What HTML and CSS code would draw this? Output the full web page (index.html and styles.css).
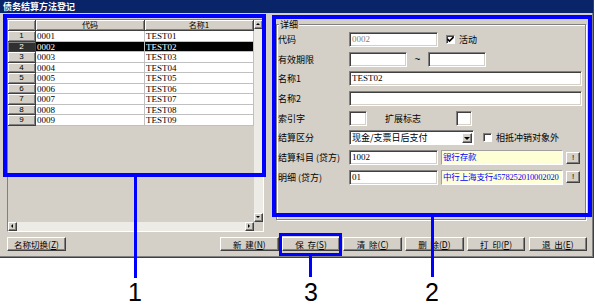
FILE: index.html
```html
<!DOCTYPE html>
<html lang="zh-CN">

<head>
    <meta charset="UTF-8">
    <title>债务结算方法登记</title>
    <link rel="stylesheet" href="styles.css">
</head>

<body>
    <div class="page">
        <div class="window">
            <div class="titlebar">债务结算方法登记</div>

            <div class="content">
                <div class="grid">
                    <div class="grid-main">
                        <div class="list">
                            <div class="hd"></div>
                            <div class="hd">代码</div>
                            <div class="hd">名称1</div>

                            <div class="num">1</div><div class="cell">0001</div><div class="cell">TEST01</div>
                            <div class="num sel">2</div><div class="cell sel">0002</div><div class="cell sel">TEST02</div>
                            <div class="num">3</div><div class="cell">0003</div><div class="cell">TEST03</div>
                            <div class="num">4</div><div class="cell">0004</div><div class="cell">TEST04</div>
                            <div class="num">5</div><div class="cell">0005</div><div class="cell">TEST05</div>
                            <div class="num">6</div><div class="cell">0006</div><div class="cell">TEST06</div>
                            <div class="num">7</div><div class="cell">0007</div><div class="cell">TEST07</div>
                            <div class="num">8</div><div class="cell">0008</div><div class="cell">TEST08</div>
                            <div class="num">9</div><div class="cell">0009</div><div class="cell">TEST09</div>
                        </div>
                        <div class="vscroll">
                            <span class="sbtn up"></span>
                            <span class="track"></span>
                            <span class="sbtn down"></span>
                        </div>
                    </div>
                    <div class="hscroll">
                        <span class="sbtn left"></span>
                        <span class="track"></span>
                        <span class="sbtn right"></span>
                        <span class="corner"></span>
                    </div>
                </div>

                <div class="group">
                    <span class="legend">详细</span>
                    <div class="rows">
                        <div class="row">
                            <span class="lbl">代码</span>
                            <span class="input w89 disabled">0002</span>
                            <span class="check on ml8">
                                <svg width="7" height="7" viewBox="0 0 7 7"><polyline points="0.5,3 2.5,5 6.5,1" fill="none" stroke="#000" stroke-width="1.6"/></svg>
                            </span>
                            <span class="chk-lbl">活动</span>
                        </div>
                        <div class="row">
                            <span class="lbl">有效期限</span>
                            <span class="input w58"></span>
                            <span class="tilde">~</span>
                            <span class="input w58"></span>
                        </div>
                        <div class="row">
                            <span class="lbl">名称1</span>
                            <span class="input w233">TEST02</span>
                        </div>
                        <div class="row">
                            <span class="lbl">名称2</span>
                            <span class="input w233"></span>
                        </div>
                        <div class="row">
                            <span class="lbl">索引字</span>
                            <span class="input w18"></span>
                            <span class="lbl2">扩展标志</span>
                            <span class="input w16"></span>
                        </div>
                        <div class="row">
                            <span class="lbl">结算区分</span>
                            <span class="select">
                                <span class="select-text">现金/支票日后支付</span>
                                <span class="drop"></span>
                            </span>
                            <span class="check ml9"></span>
                            <span class="chk-lbl">相抵冲销对象外</span>
                        </div>
                        <div class="row">
                            <span class="lbl">结算科目 (贷方)</span>
                            <span class="input w89">1002</span>
                            <span class="ref">银行存款</span>
                            <span class="mini">!</span>
                        </div>
                        <div class="row">
                            <span class="lbl">明细 (贷方)</span>
                            <span class="input w89">01</span>
                            <span class="ref">中行上海支行4578252010002020</span>
                            <span class="mini">!</span>
                        </div>
                    </div>
                </div>
            </div>

            <div class="buttons">
                <span class="btn wide">名称切换(<u>Z</u>)</span>
                <div class="btn-group">
                    <span class="btn">新&nbsp;&nbsp;建(<u>N</u>)</span>
                    <span class="btn">保&nbsp;&nbsp;存(<u>S</u>)</span>
                    <span class="btn">清&nbsp;&nbsp;除(<u>C</u>)</span>
                    <span class="btn">删&nbsp;&nbsp;除(<u>D</u>)</span>
                    <span class="btn">打&nbsp;&nbsp;印(<u>P</u>)</span>
                    <span class="btn">退&nbsp;&nbsp;出(<u>E</u>)</span>
                </div>
            </div>
        </div>

        <!-- annotation marks drawn over the screenshot -->
        <div class="mark frame1"></div>
        <div class="mark frame2"></div>
        <div class="mark frame3"></div>
        <div class="line line1"></div>
        <div class="line line2"></div>
        <div class="line line3"></div>
        <div class="callout n1">1</div>
        <div class="callout n2">2</div>
        <div class="callout n3">3</div>
    </div>
</body>

</html>
```

FILE: styles.css
```css
body {
    margin: 0;
    background-color: #fff;
    font-family: "Liberation Serif", "Noto Sans CJK SC", serif;
    font-size: 9px;
    color: #000;
}

.page {
    position: relative;
    width: 595px;
    height: 308px;
}

.window {
    width: 594px;
    height: 258px;
    box-sizing: border-box;
    background-color: #d4d0c8;
    border-right: 1px solid #404040;
    border-bottom: 1px solid #404040;
    box-shadow: inset -1px -1px #808080;
    display: flex;
    flex-direction: column;
}

.titlebar {
    height: 13px;
    line-height: 13px;
    padding-left: 3px;
    background-color: #0a246a;
    color: #fff;
    font-family: "Noto Sans CJK SC", sans-serif;
    font-weight: bold;
}

.content {
    display: flex;
    align-items: flex-start;
    gap: 12px;
    padding-left: 7px;
}

/* list grid */
.grid {
    margin-top: 6px;
    width: 257px;
    height: 213px;
    box-sizing: border-box;
    border: 1px solid;
    border-color: #808080 #fff #fff #808080;
    display: flex;
    flex-direction: column;
}

.grid-main {
    flex: 1;
    display: flex;
    min-height: 0;
}

.list {
    width: 246px;
    display: grid;
    grid-template-columns: 28px 109px 109px;
    grid-template-rows: 11px;
    grid-auto-rows: 10.5px;
    align-content: start;
}

.hd,
.num {
    box-sizing: border-box;
    background-color: #d4d0c8;
    box-shadow: inset 1px 1px #fff, inset -1px -1px #808080;
    border-right: 1px solid #404040;
    border-bottom: 1px solid #404040;
    text-align: center;
    font-family: "Noto Sans CJK SC", sans-serif;
    font-size: 8px;
    line-height: 9px;
}

.num {
    font-family: "Liberation Sans", sans-serif;
}

.num.sel {
    background-color: #303030;
    color: #fff;
    box-shadow: inset 1px 1px #808080;
}

.cell {
    box-sizing: border-box;
    background-color: #fff;
    border-right: 1px solid #c0c0c0;
    border-bottom: 1px solid #c0c0c0;
    padding-left: 1px;
    line-height: 10px;
    white-space: nowrap;
    overflow: hidden;
}

.cell.sel {
    background-color: #000;
    color: #fff;
}

.vscroll {
    width: 9px;
    display: flex;
    flex-direction: column;
}

.hscroll {
    height: 9px;
    display: flex;
}

.track {
    flex: 1;
    background-color: #ecebe6;
}

.sbtn {
    position: relative;
    width: 9px;
    height: 9px;
    flex: none;
    box-sizing: border-box;
    background-color: #d4d0c8;
    border: 1px solid;
    border-color: #fff #404040 #404040 #fff;
    box-shadow: inset -1px -1px #808080;
}

.sbtn::after {
    content: "";
    position: absolute;
    left: 1px;
    top: 1px;
    border: 2px solid transparent;
}

.sbtn.up::after {
    border-top: 0;
    border-bottom-color: #000;
    top: 2px;
}

.sbtn.down::after {
    border-bottom: 0;
    border-top-color: #000;
    top: 2px;
}

.sbtn.left::after {
    border-left: 0;
    border-right-color: #000;
    left: 2px;
}

.sbtn.right::after {
    border-right: 0;
    border-left-color: #000;
    left: 2px;
}

.hscroll .track {
    flex: none;
    width: 228px;
}

.corner {
    flex: 1;
    background-color: #d4d0c8;
}

/* detail group */
.group {
    margin-top: 11px;
    width: 310px;
    height: 196px;
    box-sizing: border-box;
    border: 1px solid #808080;
    box-shadow: inset 1px 1px #fff, 1px 1px #fff;
    padding: 0 1px;
}

.legend {
    display: block;
    width: fit-content;
    margin: -5px 0 0 1px;
    padding: 0 1px;
    height: 10px;
    line-height: 10px;
    background-color: #d4d0c8;
    font-family: "Noto Sans CJK SC", sans-serif;
}

.rows {
    margin-top: 2px;
    display: flex;
    flex-direction: column;
    gap: 4.7px;
}

.row {
    display: flex;
    align-items: center;
    height: 15px;
}

.lbl {
    width: 71px;
    flex: none;
    font-family: "Noto Sans CJK SC", sans-serif;
    white-space: nowrap;
}

.lbl2 {
    margin: 0 35px 0 18px;
    font-family: "Noto Sans CJK SC", sans-serif;
}

.input {
    height: 15px;
    box-sizing: border-box;
    background-color: #fff;
    border: 1px solid;
    border-color: #808080 #fff #fff #808080;
    box-shadow: inset 1px 1px #404040, inset -1px -1px #d4d0c8;
    padding-left: 2px;
    line-height: 13px;
    white-space: nowrap;
}

.input.disabled {
    color: #808080;
}

.w89 { width: 89px; }
.w58 { width: 58px; }
.w233 { width: 233px; }
.w18 { width: 18px; }
.w16 { width: 16px; }

.tilde {
    width: 21px;
    text-align: center;
    font-family: "Liberation Sans", sans-serif;
    font-size: 10px;
}

.check {
    width: 9px;
    height: 9px;
    box-sizing: border-box;
    background-color: #fff;
    border: 1px solid;
    border-color: #808080 #fff #fff #808080;
    box-shadow: inset 1px 1px #404040;
    display: flex;
    align-items: center;
    justify-content: center;
}

.ml8 { margin-left: 8px; }
.ml9 { margin-left: 9px; }

.chk-lbl {
    margin-left: 4px;
    font-family: "Noto Sans CJK SC", sans-serif;
}

.select {
    width: 125px;
    height: 15px;
    box-sizing: border-box;
    display: flex;
    background-color: #fff;
    border: 1px solid;
    border-color: #808080 #fff #fff #808080;
    box-shadow: inset 1px 1px #404040;
    padding: 2px 1px 1px 2px;
}

.select-text {
    flex: 1;
    line-height: 10px;
    font-family: "Noto Sans CJK SC", sans-serif;
}

.drop {
    position: relative;
    width: 10px;
    box-sizing: border-box;
    background-color: #d4d0c8;
    border: 1px solid;
    border-color: #fff #404040 #404040 #fff;
    box-shadow: inset -1px -1px #808080;
}

.drop::after {
    content: "";
    position: absolute;
    left: 1px;
    top: 3px;
    border: 3px solid transparent;
    border-bottom: 0;
    border-top-color: #000;
}

.ref {
    margin-left: 3px;
    width: 122px;
    height: 15px;
    box-sizing: border-box;
    background-color: #ffffd6;
    border: 1px solid;
    border-color: #a0a0a0 #fff #fff #a0a0a0;
    padding-left: 1px;
    line-height: 12px;
    font-size: 8.5px;
    letter-spacing: -0.15px;
    color: #0000ff;
    white-space: nowrap;
    overflow: hidden;
}

.mini {
    margin-left: 3px;
    width: 14px;
    height: 12px;
    box-sizing: border-box;
    background-color: #d4d0c8;
    border: 1px solid;
    border-color: #fff #404040 #404040 #fff;
    box-shadow: inset -1px -1px #808080;
    text-align: center;
    line-height: 9px;
    font-family: "Liberation Sans", sans-serif;
    font-size: 8px;
}

/* bottom buttons */
.buttons {
    margin-top: 5px;
    display: flex;
    justify-content: space-between;
    padding: 0 6px 0 7px;
}

.btn-group {
    display: flex;
    gap: 3.2px;
}

.btn {
    width: 58.5px;
    height: 14px;
    box-sizing: border-box;
    background-color: #d4d0c8;
    border: 1px solid;
    border-color: #fff #404040 #404040 #fff;
    box-shadow: inset -1px -1px #808080;
    display: flex;
    align-items: center;
    justify-content: center;
    font-family: "Noto Sans CJK SC", sans-serif;
    font-size: 8.5px;
    white-space: nowrap;
}

.btn.wide {
    width: 59px;
}

/* annotations */
.mark {
    position: absolute;
    box-sizing: border-box;
    border: 4px solid #0000ff;
}

.frame1 {
    left: 3px;
    top: 14px;
    width: 263px;
    height: 163px;
}

.frame2 {
    left: 272px;
    top: 15px;
    width: 320px;
    height: 202px;
}

.frame3 {
    left: 279px;
    top: 233px;
    width: 63px;
    height: 23px;
    border-width: 3px;
}

.line {
    position: absolute;
    width: 3px;
    background-color: #0000ff;
}

.line1 {
    left: 134px;
    top: 177px;
    height: 101px;
}

.line2 {
    left: 431px;
    top: 217px;
    height: 60px;
}

.line3 {
    left: 309px;
    top: 256px;
    height: 21px;
}

.callout {
    position: absolute;
    top: 280px;
    width: 20px;
    text-align: center;
    font-family: "Liberation Sans", sans-serif;
    font-size: 25px;
    line-height: 25px;
}

.n1 { left: 125px; }
.n2 { left: 422px; }
.n3 { left: 301px; }
```
